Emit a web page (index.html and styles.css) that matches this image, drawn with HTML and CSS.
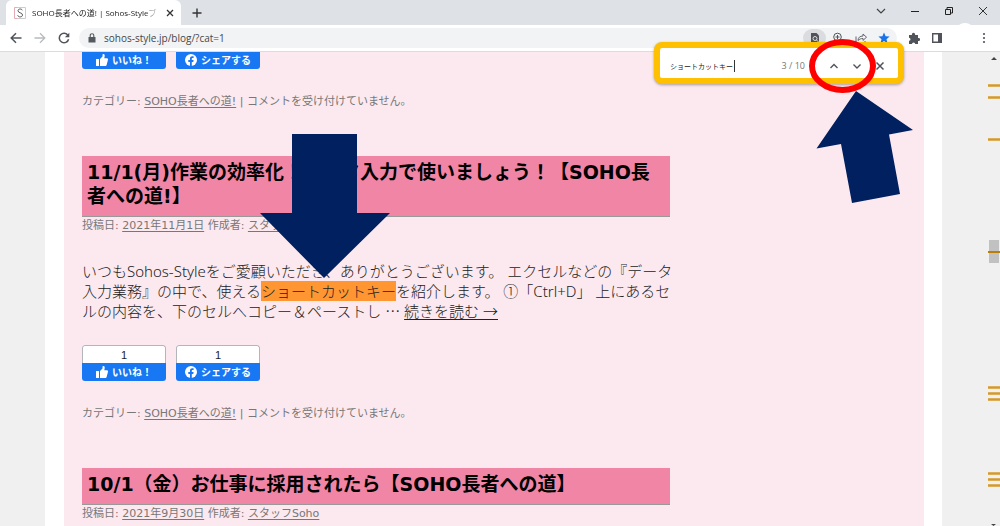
FILE: index.html
```html
<!DOCTYPE html>
<html lang="ja">
<head>
<meta charset="utf-8">
<title>SOHO長者への道! | Sohos-Styleブログ</title>
<link rel="stylesheet" href="styles.css">
</head>
<body>
<svg class="defs" aria-hidden="true">
  <symbol id="thumb" viewBox="0 0 12 12"><path d="M0 5h3v7H0zM4 5l2.500-2.500V.8C6.500.2 7 0 7.400 0 8.600 0 8.800 1 8.700 2L8.300 4.300H11c.8 0 1.200.7 1 1.400l-1.300 5C10.500 11.600 10 12 9 12H4z" fill="#fff"/></symbol>
  <symbol id="fb" viewBox="0 0 12 12"><circle cx="6" cy="6" r="6" fill="#fff"/><path d="M5 12V8H3.300V6H5V4.600C5 2.900 6 2.200 7.200 2.200l1.400.1v1.600h-.8C7 3.900 6.800 4.300 6.800 4.800V6h1.800l-.3 2H6.800v4z" fill="#1877f2"/></symbol>
</svg>
<div class="browser">
  <header class="tabstrip">
    <div class="tab">
      <svg class="favicon" viewBox="0 0 12 12"><path d="M3.500.5h-3v11h3" fill="none" stroke="#e6aab2"/><path d="M3 .5h8.500v11H3" fill="none" stroke="#ccc"/><path d="M8.300 3.300C7.800 1.500 4 1.500 4 3.800 4 6.200 8.500 5.300 8.500 8c0 2.500-4.300 2.500-4.800.3" fill="none" stroke="#555"/></svg>
      <span class="tab-title">SOHO長者への道! | Sohos-Styleブ</span>
      <button class="icon" aria-label="タブを閉じる"><svg width="8" height="8" viewBox="0 0 8 8"><path d="M1 1l6 6M7 1L1 7" stroke="#333" stroke-width="1.300"/></svg></button>
    </div>
    <button class="icon new-tab" aria-label="新しいタブ"><svg width="10" height="10" viewBox="0 0 10 10"><path d="M5 .5v9M.5 5h9" stroke="#333" stroke-width="1.400"/></svg></button>
    <div class="window-buttons">
      <button class="icon" aria-label="タブを検索"><svg width="10" height="10" viewBox="0 0 10 10"><path d="M1 3l4 4 4-4" fill="none" stroke="#444" stroke-width="1.200"/></svg></button>
      <button class="icon" aria-label="最小化"><svg width="10" height="10" viewBox="0 0 10 10"><path d="M1 5.500h8" stroke="#222"/></svg></button>
      <button class="icon" aria-label="元に戻す"><svg width="10" height="10" viewBox="0 0 10 10"><path d="M1.500 3.500h5v5h-5zM3 3V1.500h5.500V7H7" fill="none" stroke="#222"/></svg></button>
      <button class="icon" aria-label="閉じる"><svg width="10" height="10" viewBox="0 0 10 10"><path d="M1 1l8 8M9 1L1 9" stroke="#333"/></svg></button>
    </div>
  </header>
  <nav class="toolbar">
    <button class="icon" aria-label="戻る"><svg width="12" height="12" viewBox="0 0 12 12"><path d="M11.500 6H1.500M6 1.200L1.200 6 6 10.800" fill="none" stroke="#50545a" stroke-width="1.500"/></svg></button>
    <button class="icon" aria-label="進む"><svg width="12" height="12" viewBox="0 0 12 12"><path d="M.5 6h10M6 1.200L10.800 6 6 10.800" fill="none" stroke="#b9bbbe" stroke-width="1.300"/></svg></button>
    <button class="icon" aria-label="再読み込み"><svg width="12" height="12" viewBox="0 0 12 12"><path d="M10 3.500A4.700 4.700 0 1 0 10.600 7.200" fill="none" stroke="#50545a" stroke-width="1.500"/><path d="M11.300.8v4.400H6.900z" fill="#50545a"/></svg></button>
    <div class="omnibox">
      <svg width="8" height="10" viewBox="0 0 8 10"><path d="M1 4h6.500v5.500H.5V4z" fill="#555a60"/><path d="M2.200 4V2.500a1.800 1.800 0 0 1 3.600 0V4" fill="none" stroke="#555a60" stroke-width="1.100"/></svg>
      <input class="url" type="text" aria-label="アドレス" value="sohos-style.jp/blog/?cat=1">
      <div class="omni-actions">
        <button class="icon active" aria-label="ページ内検索"><svg width="12" height="12" viewBox="0 0 12 12"><path d="M2 1h5.500L10 3.500V11H2z" fill="#50545a"/><circle cx="6" cy="6.500" r="2" fill="none" stroke="#dadce0"/><path d="M7.500 8L10 10.500" stroke="#dadce0"/></svg></button>
        <button class="icon" aria-label="ズーム"><svg width="12" height="12" viewBox="0 0 12 12"><circle cx="5.500" cy="5" r="3.800" fill="none" stroke="#50545a"/><path d="M8.200 8L11 11M3.500 5h4M5.500 3v4" stroke="#50545a"/></svg></button>
        <button class="icon" aria-label="共有"><svg width="12" height="12" viewBox="0 0 12 12"><path d="M1 4.500V11h9V9M3 8.500c0-3 2-4.500 5-4.500V2l3.500 3.200L8 8.400V6.500C6 6.500 4.500 7 3 8.500z" fill="none" stroke="#62666b"/></svg></button>
        <button class="icon" aria-label="ブックマーク"><svg width="12" height="12" viewBox="0 0 12 12"><path d="M6 .5l1.600 3.800 4 .3-3.100 2.600 1 4L6 9l-3.500 2.200 1-4L.4 4.600l4-.3z" fill="#1a73e8"/></svg></button>
      </div>
    </div>
    <div class="extensions">
      <button class="icon" aria-label="拡張機能"><svg width="12" height="12" viewBox="0 0 12 12"><path d="M1 3h3a1.600 1.600 0 1 1 3 0h3v3a1.600 1.600 0 1 1 0 3v3H7.200a1.600 1.600 0 1 0-3.200 0H1V8.800a1.500 1.500 0 1 0 0-3z" fill="#50545a"/></svg></button>
      <button class="icon" aria-label="サイドパネル"><svg width="12" height="12" viewBox="0 0 12 12"><path d="M1.700 1.700h8.600v8.600H1.700z" fill="none" stroke="#50545a" stroke-width="1.400"/><path d="M7 1h4v10H7z" fill="#50545a"/></svg></button>
      <button class="icon menu" aria-label="メニュー"><svg width="12" height="12" viewBox="0 0 12 12"><g fill="#50545a"><circle cx="6" cy="2" r="1.100"/><circle cx="6" cy="6" r="1.100"/><circle cx="6" cy="10" r="1.100"/></g></svg></button>
    </div>
  </nav>
  <div class="viewport">
    <div class="site">
      <main class="content">
        <article class="post scrolled">
          <div class="social">
            <div class="social-item"><output>1</output><button><svg width="12" height="12"><use href="#thumb"/></svg>いいね！</button></div>
            <div class="social-item"><output>1</output><button><svg width="12" height="12"><use href="#fb"/></svg>シェアする</button></div>
          </div>
          <p class="meta category">カテゴリー: <a href="#">SOHO長者への道!</a> | コメントを受け付けていません。</p>
        </article>
        <article class="post">
          <h2>11/1(月)作業の効率化！データ入力で使いましょう！【SOHO長<br>者への道!】</h2>
          <p class="meta">投稿日: <a href="#">2021年11月1日</a> 作成者: <a href="#">スタッフSoho</a></p>
          <p class="excerpt">いつもSohos-Styleをご愛顧いただき、ありがとうございます。 エクセルなどの『データ<br>入力業務』の中で、使える<mark>ショートカットキー</mark>を紹介します。 ①「Ctrl+D」 上にあるセ<br>ルの内容を、下のセルへコピー＆ペーストし <span class="ellipsis">…</span> <a href="#">続きを読む →</a></p>
          <div class="social">
            <div class="social-item"><output>1</output><button><svg width="12" height="12"><use href="#thumb"/></svg>いいね！</button></div>
            <div class="social-item"><output>1</output><button><svg width="12" height="12"><use href="#fb"/></svg>シェアする</button></div>
          </div>
          <p class="meta category">カテゴリー: <a href="#">SOHO長者への道!</a> | コメントを受け付けていません。</p>
        </article>
        <article class="post">
          <h2>10/1（金）お仕事に採用されたら【SOHO長者への道】</h2>
          <p class="meta">投稿日: <a href="#">2021年9月30日</a> 作成者: <a href="#">スタッフSoho</a></p>
        </article>
      </main>
    </div>
    <svg class="scrollbar" width="12" height="474" viewBox="0 0 12 474">
      <path d="M3 8l3-3 3 3zM3 472h5l-2.500 2z" fill="#444"/>
      <path d="M1 188h10v23H1z" fill="#c1c1c1"/>
      <path d="M0 33.500h12M0 45.500h12M0 87.500h12M0 335.500h12M0 341.500h12M0 347.500h12M0 421.500h12M0 427.500h12M0 433.500h12" stroke="#dcc39c" stroke-width="3"/>
      <path d="M0 33.500h12M0 45.500h12M0 87.500h12M0 335.500h12M0 341.500h12M0 347.500h12M0 421.500h12M0 427.500h12M0 433.500h12" stroke="#dc9a14" stroke-width="2"/>
      <path d="M0 200h12" stroke="#b97d08" stroke-width="2"/>
    </svg>
  </div>
  <form class="find">
    <div class="find-field">
      <input class="find-text" type="text" aria-label="検索語" value="ショートカットキー">
    </div>
    <span class="count">3 / 10</span>
    <button type="button" class="icon" aria-label="前へ"><svg width="10" height="10" viewBox="0 0 10 10"><path d="M1.500 7L5 3.500 8.500 7" fill="none" stroke="#50545a" stroke-width="1.400"/></svg></button>
    <button type="button" class="icon" aria-label="次へ"><svg width="10" height="10" viewBox="0 0 10 10"><path d="M1.500 3.500L5 7l3.500-3.500" fill="none" stroke="#50545a" stroke-width="1.400"/></svg></button>
    <button type="button" class="icon" aria-label="検索を閉じる"><svg width="10" height="10" viewBox="0 0 10 10"><path d="M1.500 1.500l7 7M8.500 1.500l-7 7" stroke="#50545a" stroke-width="1.500"/></svg></button>
  </form>
  <svg class="callouts" width="1000" height="526" viewBox="0 0 1000 526" aria-hidden="true">
    <ellipse cx="965" cy="34" rx="10" ry="11" fill="#fff"/>
    <ellipse cx="842.500" cy="66" rx="30.500" ry="24" fill="none" stroke="#f00" stroke-width="6"/>
    <path d="M292 134h65v79h33l-66 65-64-65h32z" fill="#002060"/>
    <path d="M856 91l57 39-24 4.500 11 59.500-48 9-11-59-24.500 4.500z" fill="#002060"/>
  </svg>
</div>
</body>
</html>
```
FILE: styles.css
```css
* { box-sizing: border-box; }
body {
  margin: 0;
  font-family: "DejaVu Sans", "Noto Sans CJK JP", sans-serif;
  font-size: 11px;
  color: #222;
}
.defs { position: absolute; width: 0; height: 0; }
button, input { font: inherit; border: 0; padding: 0; background: none; color: inherit; }
.browser {
  position: relative;
  display: flex;
  flex-direction: column;
  height: 100vh;
  overflow: hidden;
}
.icon { display: inline-flex; align-items: center; justify-content: center; flex: none; }
.icon svg { display: block; }

.tabstrip {
  display: flex;
  align-items: center;
  height: 25px;
  flex: none;
  padding-left: 6px;
  background: #dee1e6;
}
.tab {
  display: flex;
  align-items: center;
  gap: 6px;
  width: 175px;
  height: 25px;
  padding: 0 7px 0 8px;
  border-radius: 6px 6px 0 0;
  background: #fff;
}
.favicon { width: 12px; height: 12px; flex: none; }
.tab-title {
  flex: 1;
  white-space: nowrap;
  font-family: "Open Sans", "Noto Sans CJK JP", sans-serif;
  font-size: 8px;
  line-height: 16px;
  mask-image: linear-gradient(to right, #000 88%, transparent);
}
.new-tab { margin-left: 11px; }
.window-buttons { display: flex; gap: 24px; margin-left: auto; padding: 0 12px 4px 0; }

.toolbar {
  display: flex;
  align-items: center;
  gap: 12px;
  height: 27px;
  flex: none;
  padding: 0 10px;
  background: #fff;
  border-bottom: 1px solid #dcdcde;
}
.omnibox {
  display: flex;
  align-items: center;
  flex: 1;
  gap: 8px;
  height: 20px;
  margin-left: -3px;
  padding: 0 2px 0 9px;
  border-radius: 10px;
  background: #f1f3f4;
}
.url { flex: 1; min-width: 0; height: 18px; font-family: "Open Sans", sans-serif; font-size: 10px; color: #44474b; }
.omni-actions { display: flex; }
.omni-actions .icon { width: 23px; height: 18px; }
.omni-actions .active { border-radius: 9px; background: #dadce0; }
.extensions { display: flex; gap: 11px; margin-left: -1px; }
.extensions .menu { margin-left: 24px; }

.viewport { display: flex; flex: 1; min-height: 0; background: #f0f0f0; }
.site { flex: 1; margin: 0 46px 0 45px; padding: 0 18px 0 19px; background: #fff; overflow: hidden; }
.content { display: flow-root; min-height: 100%; padding: 0 18px; background: #fbe9ef; }
.scrollbar { flex: none; }
.post { max-width: 588px; margin-bottom: 45px; white-space: nowrap; }
.scrolled { margin-top: -19px; }
h2 {
  margin: 0;
  padding: 4px 5px 8px;
  border-bottom: 1px solid #999;
  background: #f085a6;
  color: #000;
  font-size: 19px;
  line-height: 24px;
}
.meta { margin: 0; line-height: 18px; color: #777; }
.category { margin-top: 24px; }
.meta a, .excerpt a { color: inherit; text-underline-offset: 2px; }
.excerpt {
  margin: 26px 0 24px;
  font-family: "Noto Sans", "Noto Sans CJK JP", sans-serif;
  font-size: 15px;
  font-weight: 300;
  line-height: 20px;
}
.ellipsis { font-family: "Noto Sans CJK JP", sans-serif; }
mark { background: #ff9632; color: inherit; }
.social { display: flex; gap: 10px; }
.social-item { width: 84px; border-radius: 3px; overflow: hidden; }
.social-item output {
  display: block;
  height: 18px;
  border: 1px solid #b3b5bd;
  border-bottom: 0;
  border-radius: 3px 3px 0 0;
  background: #fff;
  text-align: center;
  line-height: 18px;
  font-family: "Liberation Sans", sans-serif;
}
.social-item button {
  display: flex;
  align-items: center;
  justify-content: center;
  gap: 4px;
  width: 100%;
  height: 18px;
  background: #1877f2;
  color: #fff;
  font-family: "Noto Sans CJK JP", sans-serif;
  font-size: 10px;
  font-weight: 700;
  line-height: 18px;
}

.find {
  position: absolute;
  top: 42px;
  right: 96px;
  display: flex;
  align-items: center;
  gap: 13px;
  width: 250px;
  height: 42px;
  padding: 5px 13px 0 10px;
  border: 6px solid #ffc000;
  border-radius: 8px;
  background: #fff;
  box-shadow: 0 1px 3px #0005;
}
.find-field { display: flex; flex: 1; min-width: 0; align-items: center; }
.find-field::after { content: ""; width: 1px; height: 12px; background: #333; }
.find-text { width: 64px; height: 16px; font-family: "Noto Sans CJK JP", sans-serif; font-size: 7px; }
.count { margin-right: 11px; color: #777; font-family: "Open Sans", sans-serif; font-size: 9px; }
.callouts { position: absolute; top: 0; right: 0; pointer-events: none; }
```
